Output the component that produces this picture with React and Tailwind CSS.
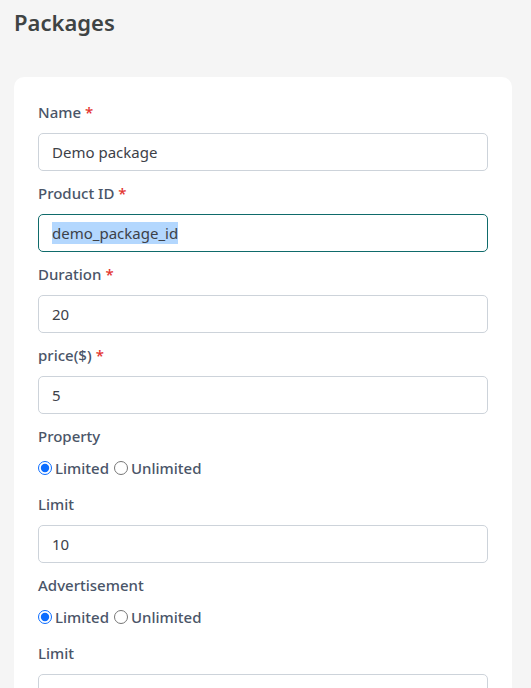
import { useState } from 'react';

const font = { fontFamily: '"Noto Sans", "Open Sans", sans-serif' };

function Label({ children, required }) {
  return (
    <label className="block text-[15px] leading-6 text-[#4a5568] font-medium">
      {children}
      {required && <span className="ml-1 text-[#e3342f]">*</span>}
    </label>
  );
}

function TextField({ label, required, value, focused }) {
  return (
    <div className="mb-[10px]">
      <Label required={required}>{label}</Label>
      <div
        className={`mt-[9px] h-[38px] rounded-[5px] border px-[13px] flex items-center text-[15px] text-[#3d4148] ${
          focused ? 'border-[#0f6b6b]' : 'border-[#cdd3da]'
        }`}
      >
        {focused ? <span className="bg-[#b3d7fe]">{value}</span> : value}
      </div>
    </div>
  );
}

function RadioGroup({ label, name }) {
  const [val, setVal] = useState('limited');
  return (
    <div className="mb-[13px]">
      <Label>{label}</Label>
      <div className="mt-[9px] flex items-center text-[15px] leading-[22px] text-[#4a5568] font-medium">
        <input
          type="radio"
          name={name}
          checked={val === 'limited'}
          onChange={() => setVal('limited')}
          className="m-0 mr-[3px] h-[14px] w-[14px] accent-[#0b6cff]"
        />
        <span>Limited</span>
        <input
          type="radio"
          name={name}
          checked={val === 'unlimited'}
          onChange={() => setVal('unlimited')}
          className="m-0 ml-[5px] mr-[3px] h-[14px] w-[14px]"
        />
        <span>Unlimited</span>
      </div>
    </div>
  );
}

export default function App() {
  return (
    <div className="min-h-screen bg-[#f5f5f5] pl-[14px] pr-[19px] pt-[6px]" style={font}>
      <h1 className="text-[22px] leading-8 font-semibold text-[#3f4444]">Packages</h1>
      <div className="mt-[39px] bg-white rounded-[10px] px-[24px] pt-[23px] pb-6">
        <TextField label="Name" required value="Demo package" />
        <TextField label="Product ID" required value="demo_package_id" focused />
        <TextField label="Duration" required value="20" />
        <TextField label="price($)" required value="5" />
        <RadioGroup label="Property" name="property" />
        <TextField label="Limit" value="10" />
        <RadioGroup label="Advertisement" name="advertisement" />
        <TextField label="Limit" value="" />
      </div>
    </div>
  );
}
